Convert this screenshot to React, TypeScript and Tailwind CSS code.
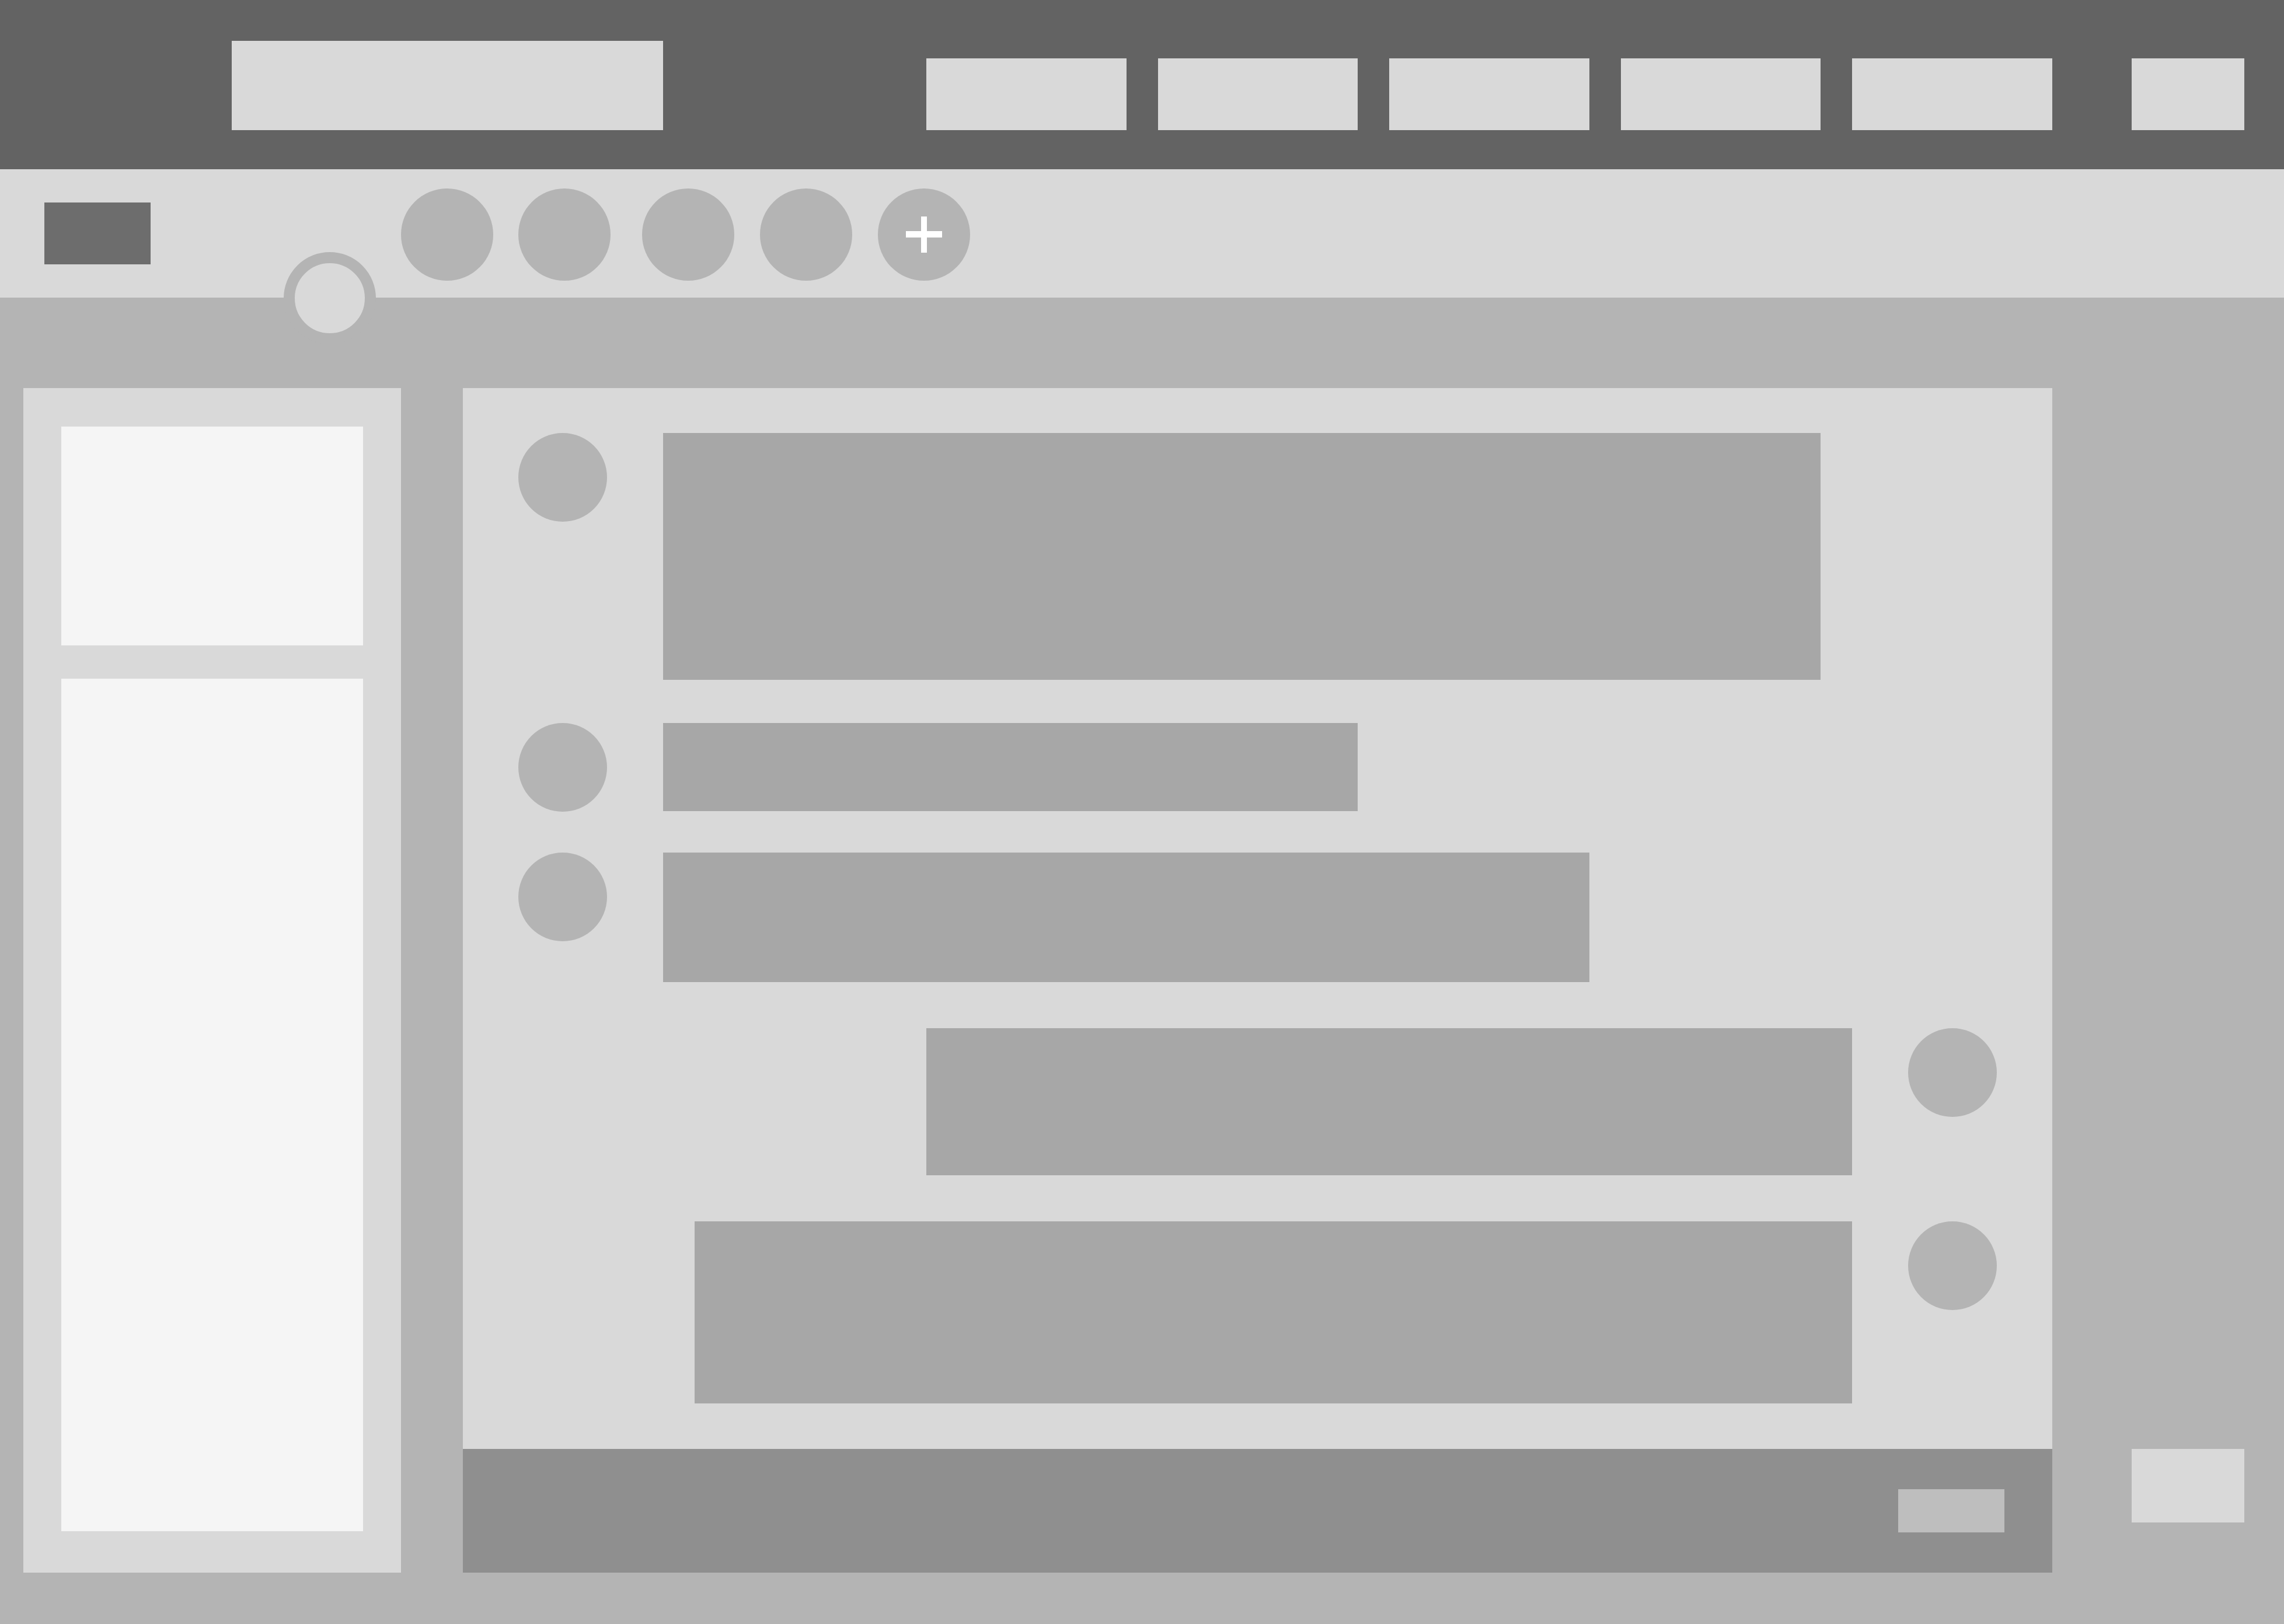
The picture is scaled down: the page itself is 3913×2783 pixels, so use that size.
import React from 'react'

// Wireframe chat layout: header nav, avatar strip, sidebar, message panel

function Avatar({ className = '' }: { className?: string }) {
  return <div className={`h-[152px] w-[152px] shrink-0 rounded-full bg-[#b4b4b4] ${className}`} />
}

function PlusIcon() {
  return (
    <svg width="62" height="62" viewBox="0 0 62 62" fill="#ffffff">
      <rect x="26" y="0" width="10" height="62" />
      <rect x="0" y="25" width="62" height="11" />
    </svg>
  )
}

const stripCircles = ['ml-[429px]', 'ml-[43px]', 'ml-[54px]', 'ml-[44px]']

export default function App() {
  return (
    <div className="flex h-[2783px] w-[3913px] flex-col overflow-hidden bg-[#b4b4b4]">
      {/* header */}
      <header className="flex h-[290px] shrink-0 items-start bg-[#636363]">
        <div className="ml-[397px] mt-[70px] h-[153px] w-[739px] bg-[#d9d9d9]" />
        <nav className="ml-[451px] mt-[100px] grid w-[1929px] grid-cols-5 gap-[54px]">
          {[0, 1, 2, 3, 4].map((i) => (
            <div key={i} className="h-[123px] bg-[#d9d9d9]" />
          ))}
        </nav>
        <div className="ml-[136px] mt-[100px] h-[123px] w-[193px] bg-[#d9d9d9]" />
      </header>

      {/* avatar strip */}
      <div className="relative flex h-[220px] shrink-0 items-center bg-[#d9d9d9]">
        <div className="ml-[76px] h-[106px] w-[182px] bg-[#6d6d6d]" />
        {stripCircles.map((m, i) => (
          <div key={i} className={`mt-[4px] h-[158px] w-[158px] rounded-full bg-[#b4b4b4] ${m}`} />
        ))}
        <div className="ml-[44px] mt-[4px] flex h-[158px] w-[158px] items-center justify-center rounded-full bg-[#b4b4b4]">
          <PlusIcon />
        </div>
        <div className="absolute left-[486px] top-[142px] z-10 h-[158px] w-[158px] rounded-full border-[19px] border-[#b4b4b4] bg-[#d9d9d9]" />
      </div>

      {/* body */}
      <div className="flex flex-1 items-stretch pb-[88px] pt-[155px]">
        <aside className="ml-[40px] flex w-[647px] flex-col gap-[57px] bg-[#d9d9d9] px-[65px] pb-[71px] pt-[66px]">
          <div className="h-[375px] bg-[#f5f5f5]" />
          <div className="flex-1 bg-[#f5f5f5]" />
        </aside>

        <main className="ml-[106px] flex w-[2723px] flex-col bg-[#d9d9d9]">
          <div className="flex flex-1 flex-col px-[95px] pt-[77px]">
            <div className="flex items-start gap-[96px]">
              <Avatar />
              <div className="h-[423px] w-[1983px] bg-[#a7a7a7]" />
            </div>
            <div className="mt-[74px] flex items-start gap-[96px]">
              <Avatar />
              <div className="h-[151px] w-[1190px] bg-[#a7a7a7]" />
            </div>
            <div className="mt-[70px] flex items-start gap-[96px]">
              <Avatar />
              <div className="h-[222px] w-[1587px] bg-[#a7a7a7]" />
            </div>
            <div className="mt-[79px] flex items-start justify-end gap-[96px]">
              <div className="h-[252px] w-[1586px] bg-[#a7a7a7]" />
              <Avatar />
            </div>
            <div className="mt-[79px] flex items-start justify-end gap-[96px]">
              <div className="h-[312px] w-[1983px] bg-[#a7a7a7]" />
              <Avatar />
            </div>
          </div>
          <footer className="flex h-[212px] shrink-0 items-center justify-end bg-[#8f8f8f] pr-[82px]">
            <div className="h-[74px] w-[182px] bg-[#bebebe]" />
          </footer>
        </main>

        <div className="ml-[136px] flex flex-col justify-end pb-[86px]">
          <div className="h-[126px] w-[193px] bg-[#d9d9d9]" />
        </div>
      </div>
    </div>
  )
}
